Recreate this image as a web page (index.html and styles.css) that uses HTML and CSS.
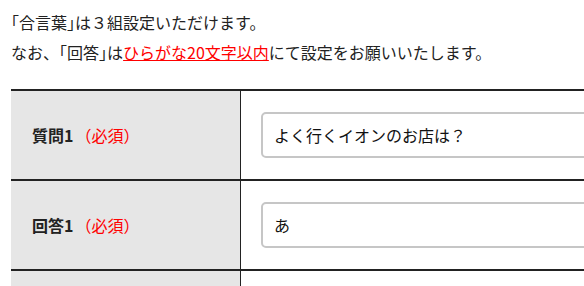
FILE: index.html
```html
<!DOCTYPE html>
<html lang="ja">
<head>
<meta charset="utf-8">
<title>合言葉設定</title>
<link rel="stylesheet" href="styles.css">
</head>
<body>
<div class="page">
  <div class="intro">
    <p class="line"><span class="bracket">「</span>合言葉<span class="bracket">」</span>は３組設定いただけます。</p>
    <p class="line">なお、<span class="bracket">「</span>回答<span class="bracket">」</span>は<a class="rule" href="#">ひらがな20文字以内</a>にて設定をお願いいたします。</p>
  </div>
  <div class="form-table">
    <div class="row">
      <div class="label"><span class="label-name">質問1</span><span class="required">（必須）</span></div>
      <div class="field"><input class="text-input" type="text" value="よく行くイオンのお店は？"></div>
    </div>
    <div class="row">
      <div class="label"><span class="label-name">回答1</span><span class="required">（必須）</span></div>
      <div class="field"><input class="text-input" type="text" value="あ"></div>
    </div>
    <div class="row">
      <div class="label"></div>
      <div class="field"></div>
    </div>
  </div>
</div>
</body>
</html>
```

FILE: styles.css
```css
html, body {
  margin: 0;
  padding: 0;
  overflow: hidden;
  background: #ffffff;
}

body {
  font-family: "Noto Sans CJK JP", "Noto Sans", sans-serif;
  font-size: 16px;
  color: #222222;
}

.page {
  width: 760px;
  padding-left: 11px;
}

.intro {
  padding-top: 7px;
}

.line {
  margin: 0;
  line-height: 30px;
  text-spacing-trim: space-all;
}

.bracket {
  font-feature-settings: "halt";
}

.rule {
  color: #ff0000;
  text-decoration: underline;
}

.form-table {
  margin-top: 22px;
  border-top: 2px solid #222222;
}

.row {
  display: grid;
  grid-template-columns: 230px 1fr;
  border-bottom: 2px solid #222222;
}

.label {
  background: #e6e6e6;
  border-right: 1px solid #222222;
  display: flex;
  align-items: center;
  padding-left: 21px;
  font-weight: bold;
}

.required {
  color: #ff0000;
  font-weight: normal;
  margin-left: 2px;
}

.field {
  padding: 21px 0 21px 20px;
  min-height: 46px;
}

.text-input {
  box-sizing: border-box;
  display: block;
  width: 100%;
  height: 46px;
  border: 2px solid #c6c6c6;
  border-radius: 5px;
  padding: 0 11px;
  font-family: "Noto Sans CJK JP", "Noto Sans", sans-serif;
  font-size: 16px;
  color: #111111;
  background: #ffffff;
  outline: none;
}
```
